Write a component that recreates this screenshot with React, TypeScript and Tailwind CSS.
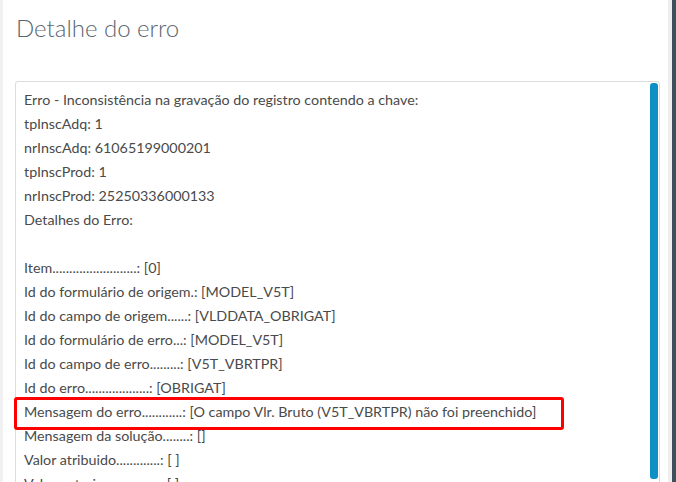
import React from "react";

const lines: string[] = [
  "Erro - Inconsistência na gravação do registro contendo a chave:",
  "tpInscAdq: 1",
  "nrInscAdq: 61065199000201",
  "tpInscProd: 1",
  "nrInscProd: 25250336000133",
  "Detalhes do Erro:",
  "",
  "Item.........................: [0]",
  "Id do formulário de origem.: [MODEL_V5T]",
  "Id do campo de origem......: [VLDDATA_OBRIGAT]",
  "Id do formulário de erro...: [MODEL_V5T]",
  "Id do campo de erro.........: [V5T_VBRTPR]",
  "Id do erro...................: [OBRIGAT]",
  "Mensagem do erro............: [O campo Vlr. Bruto (V5T_VBRTPR) não foi preenchido]",
  "Mensagem da solução........: []",
  "Valor atribuido.............: [ ]",
  "Valor anterior...............: [ ]",
];

export default function App() {
  return (
    <div
      className="relative h-[482px] w-[676px] overflow-hidden bg-white flex"
      style={{ fontFamily: "Lato, 'Open Sans', sans-serif" }}
    >
      <div className="w-[3px] bg-[#f1f1f1]" />
      <div className="flex-1 flex flex-col pl-[12px] pr-[8px]">
        <h1 className="mt-[14px] ml-[1px] text-[24px] leading-[28px] text-[#5a666e] font-light">
          Detalhe do erro
        </h1>
        <div className="mt-[39px] flex h-[420px] rounded-[3px] border border-[#dcdcdc]">
          <div className="flex-1 pt-[6px] pl-[8px] text-[14.3px] leading-[24px] text-[#4a4a4a]">
            {lines.map((l, i) =>
              i === 13 ? (
                <div key={i} className="relative h-[24px] whitespace-pre">
                  <div className="absolute left-[-10px] top-[-3px] h-[33px] w-[550px] rounded-[3px] border-[3px] border-[#ff0000]" />
                  {l}
                </div>
              ) : (
                <div key={i} className="whitespace-pre h-[24px]">
                  {l}
                </div>
              )
            )}
          </div>
          <div className="w-[8px] mt-[1px] mr-[1px] rounded-[3px] bg-[#0e90c4] h-[396px]" />
        </div>
      </div>
      <div className="w-[4px] bg-[#eeeeee]" />
      <div className="w-[4px] bg-[#3e505c]" />
    </div>
  );
}
